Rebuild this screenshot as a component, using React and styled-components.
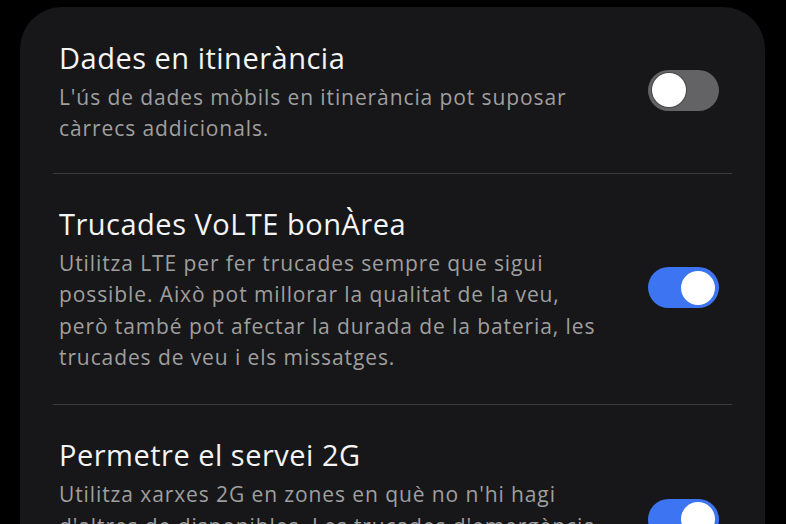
import React from "react"
import styled, { createGlobalStyle } from "styled-components"

const Global = createGlobalStyle`
  html, body {
    margin: 0;
    background: #000;
  }
  body {
    font-family: "Open Sans", "Noto Sans", sans-serif;
    -webkit-font-smoothing: antialiased;
  }
`

const settings = [
    {
        title: "Dades en itinerància",
        lines: ["L'ús de dades mòbils en itinerància pot suposar", "càrrecs addicionals."],
        on: false,
    },
    {
        title: "Trucades VoLTE bonÀrea",
        lines: [
            "Utilitza LTE per fer trucades sempre que sigui",
            "possible. Això pot millorar la qualitat de la veu,",
            "però també pot afectar la durada de la bateria, les",
            "trucades de veu i els missatges.",
        ],
        on: true,
    },
    {
        title: "Permetre el servei 2G",
        lines: [
            "Utilitza xarxes 2G en zones en què no n'hi hagi",
            "d'altres de disponibles. Les trucades d'emergència",
            "sempre es poden fer en xarxes 2G, encara que",
            "aquesta opció estigui desactivada.",
        ],
        on: true,
    },
]

export default function App() {
    return (
        <>
            <Global />
            <Screen>
                <Card>
                    {settings.map((s, i) => (
                        <Row key={s.title} $first={i === 0}>
                            <Texts>
                                <Title>{s.title}</Title>
                                <Desc>
                                    {s.lines.map(l => <Line key={l}>{l}</Line>)}
                                </Desc>
                            </Texts>
                            <Toggle $on={s.on}>
                                <Knob $on={s.on} />
                            </Toggle>
                        </Row>
                    ))}
                </Card>
            </Screen>
        </>
    )
}

const Screen = styled.div`
    width: 786px;
    height: 524px;
    overflow: hidden;
    background: #000;
    padding: 7px 21px 0 20px;
    box-sizing: border-box;
`

const Card = styled.div`
    background: #171719;
    border-radius: 42px 42px 0 0;
    padding: 0 33px;
    min-height: 600px;
`

const Row = styled.div`
    display: flex;
    align-items: center;
    gap: 20px;
    padding: ${p => (p.$first ? "32px 13px 28px 6px" : "31px 13px 31px 6px")};
    border-top: ${p => (p.$first ? "none" : "1.5px solid #3a3a3c")};
`

const Texts = styled.div`
    flex: 1;
    display: flex;
    flex-direction: column;
    gap: 5px;
`

const Title = styled.div`
    color: #f4f4f4;
    font-size: 29px;
    line-height: 38px;
    letter-spacing: 0.5px;
`

const Desc = styled.div`
    color: #9f9f9f;
    font-size: 21px;
    line-height: 31.4px;
    letter-spacing: 0.9px;
`

const Line = styled.div`
    white-space: nowrap;
`

const Toggle = styled.div`
    flex: none;
    width: 71px;
    height: 41px;
    margin-top: -3px;
    border-radius: 21px;
    background: ${p => (p.$on ? "#3d74f1" : "#636366")};
    display: flex;
    align-items: center;
    justify-content: ${p => (p.$on ? "flex-end" : "flex-start")};
    padding: 0 4px;
    box-sizing: border-box;
`

const Knob = styled.div`
    width: 34px;
    height: 34px;
    border-radius: 50%;
    background: #fff;
    box-shadow: ${p => (p.$on ? "none" : "0 0 0 1px #4a4a4c")};
`
